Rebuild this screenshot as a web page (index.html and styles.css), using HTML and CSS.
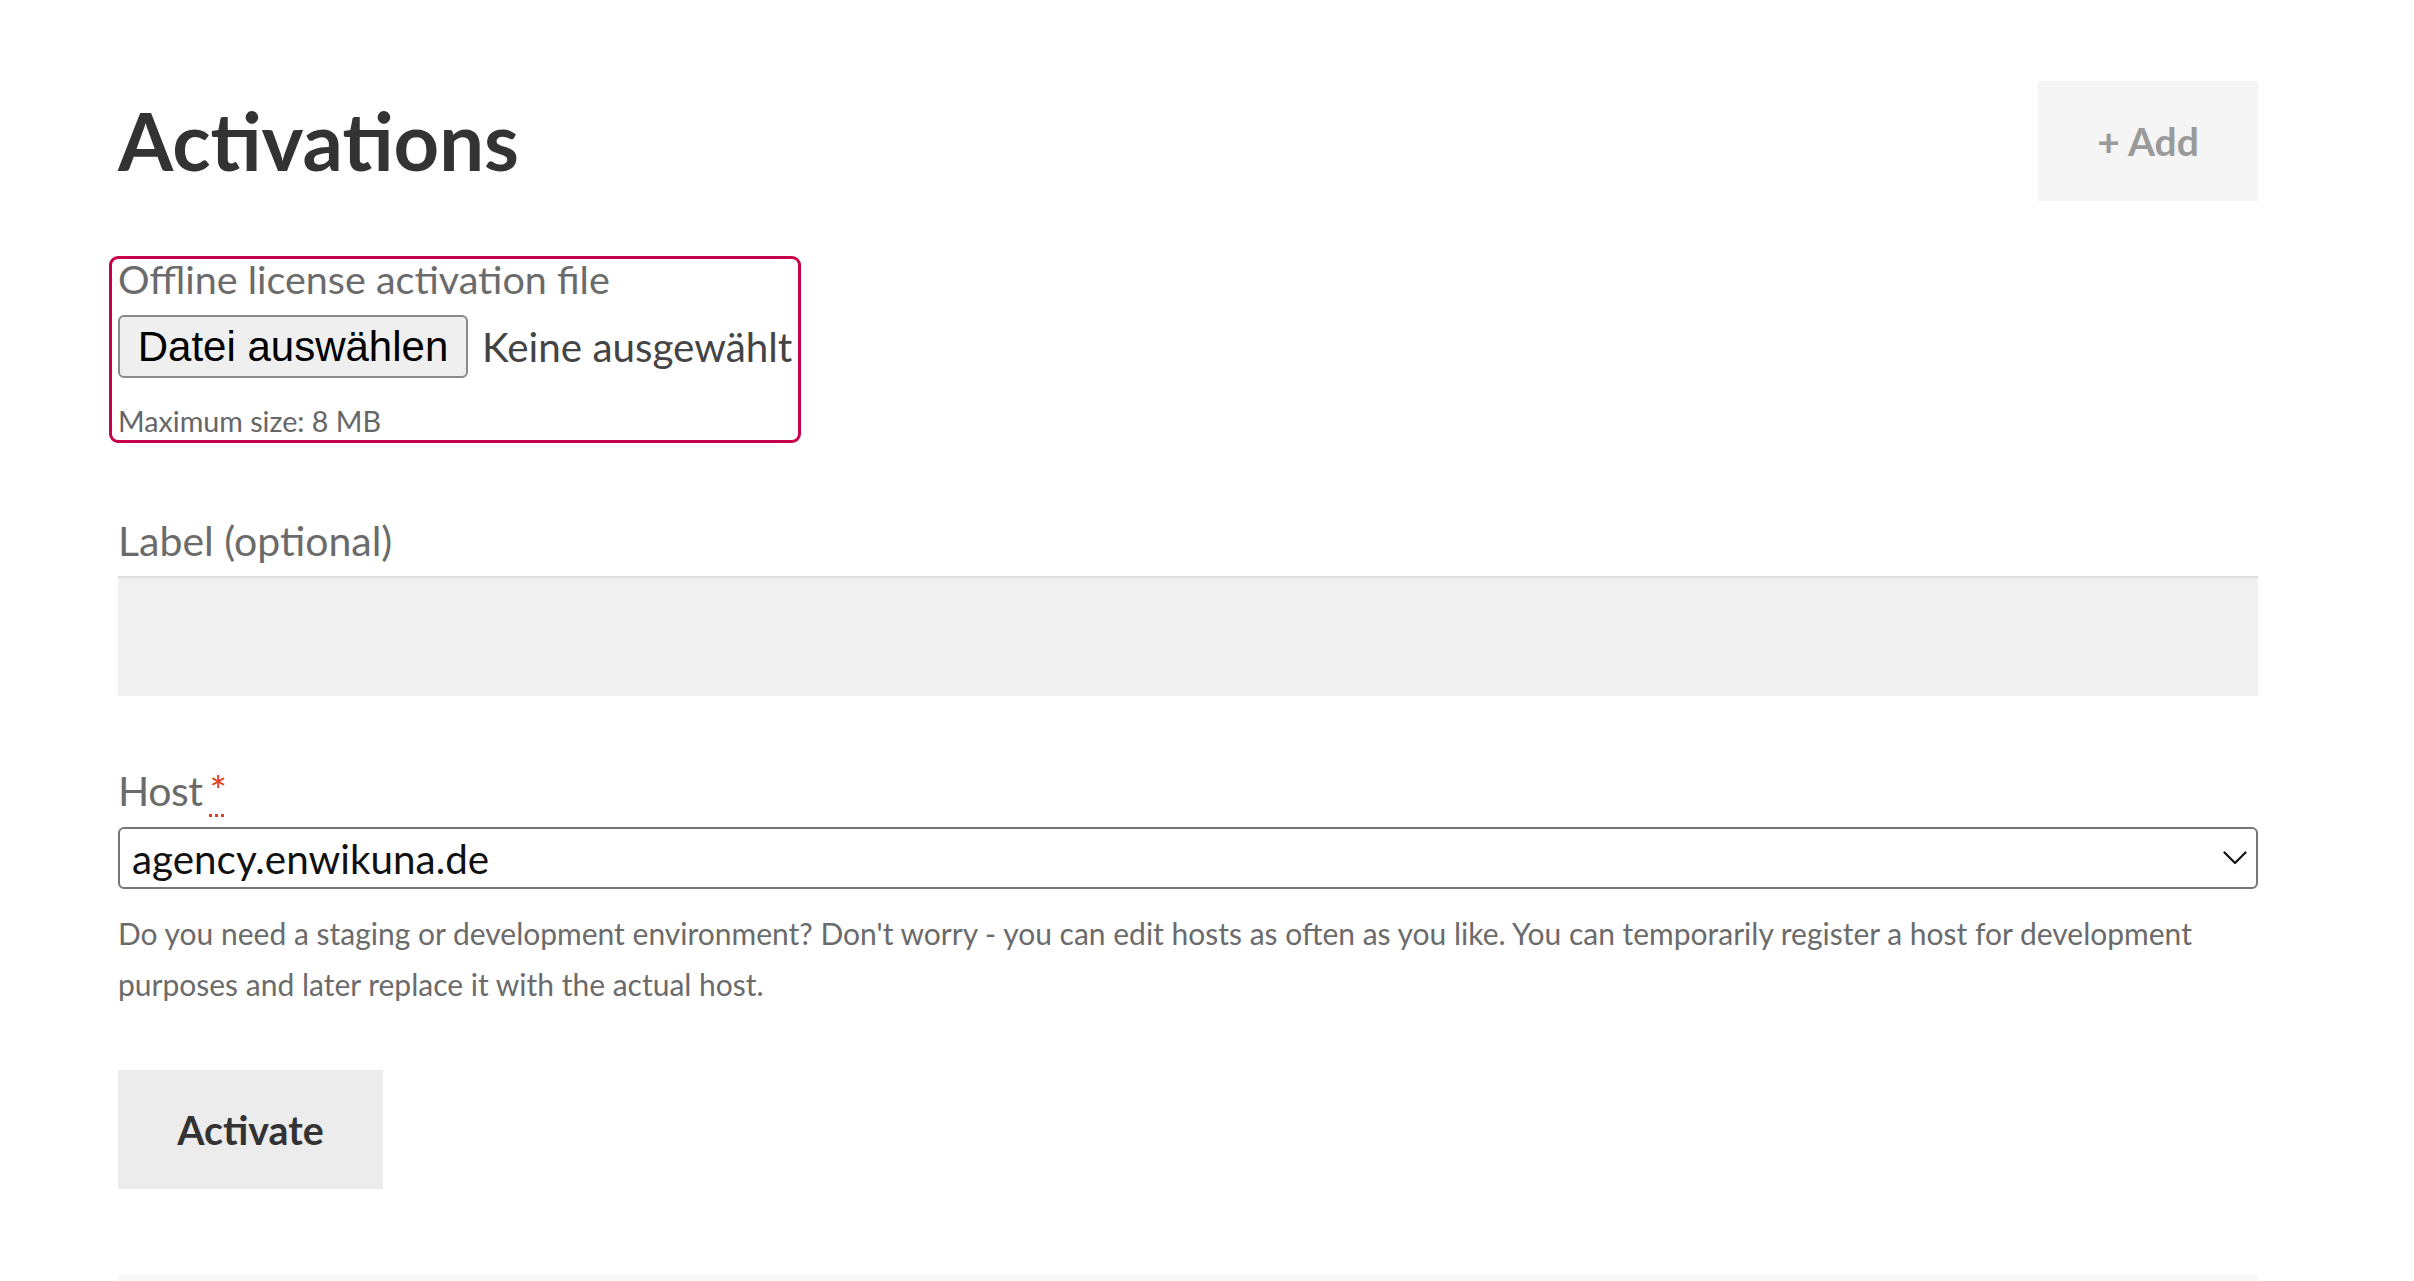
FILE: index.html
```html
<!DOCTYPE html>
<html lang="en">
<head>
<meta charset="utf-8">
<title>Activations</title>
<link rel="stylesheet" href="styles.css">
</head>
<body>
<main class="page">
  <header class="page-head">
    <h1 class="title">Activations</h1>
    <button class="btn-add" type="button">+ Add</button>
  </header>

  <form class="form">
    <div class="file-box">
      <label class="label label-file">Offline license activation file</label>
      <div class="file-row">
        <button class="file-btn" type="button">Datei auswählen</button>
        <span class="file-name">Keine ausgewählt</span>
      </div>
      <small class="hint">Maximum size: 8 MB</small>
    </div>

    <div class="field field-label">
      <label class="label" for="lbl">Label (optional)</label>
      <input class="text-input" id="lbl" type="text">
    </div>

    <div class="field field-host">
      <label class="label label-host" for="host">Host <abbr class="req" title="required">*</abbr></label>
      <div class="select-wrap">
        <select class="select" id="host">
          <option>agency.enwikuna.de</option>
        </select>
        <svg class="chev" width="24" height="14" viewBox="0 0 24 14"><path d="M1.5 1.5 L12 12 L22.5 1.5" fill="none" stroke="#111" stroke-width="2.2" stroke-linecap="round" stroke-linejoin="round"/></svg>
      </div>
      <p class="help">Do you need a staging or development environment? Don't worry - you can edit hosts as often as you like. You can temporarily register a host for development purposes and later replace it with the actual host.</p>
    </div>

    <button class="btn-activate" type="button">Activate</button>
  </form>

  <div class="next-band"></div>
</main>
</body>
</html>
```

FILE: styles.css
```css
* { box-sizing: border-box; }

html, body {
  margin: 0;
  padding: 0;
  background: #fff;
  font-family: "Lato", "Noto Sans", sans-serif;
  overflow: hidden;
}

.page {
  width: 2140px;
  margin: 0 0 0 118px;
  padding-top: 81px;
}

.page-head {
  display: flex;
  justify-content: space-between;
  align-items: center;
  height: 120px;
}

.title {
  margin: 0;
  font-size: 79.5px;
  font-weight: 700;
  line-height: 1;
  color: #333;
}

.btn-add {
  width: 220px;
  height: 120px;
  border: 0;
  background: #f5f5f5;
  color: #9a9a9a;
  font-family: inherit;
  font-size: 39px;
  font-weight: 700;
  padding: 0;
}

.form {
  display: flex;
  flex-direction: column;
  align-items: stretch;
}

.file-box {
  display: flex;
  flex-direction: column;
  align-items: flex-start;
  width: fit-content;
  margin-top: 55px;
  margin-left: -9px;
  padding: 2px 6px 4px 6px;
  border: 3px solid #c8004c;
  border-radius: 9px;
}

.label {
  display: block;
  font-size: 41px;
  line-height: 46px;
  color: #6b6b6b;
}

.label-file {
  font-size: 39.5px;
  line-height: 36px;
}

.label-host {
  letter-spacing: -0.5px;
}

.file-row {
  display: flex;
  align-items: center;
  gap: 14px;
  margin-top: 18px;
}

.file-btn {
  width: 350px;
  height: 63px;
  padding: 0;
  border: 2px solid #8a8a8a;
  border-radius: 6px;
  background: #efefef;
  color: #000;
  font-family: "Liberation Sans", Arial, sans-serif;
  font-size: 42px;
}

.file-name {
  font-size: 40.4px;
  color: #444;
}

.hint {
  display: block;
  margin-top: 28px;
  font-size: 28.7px;
  line-height: 30px;
  color: #666;
}

.field-label {
  margin-top: 75px;
}

.field-host {
  margin-top: 72px;
}

.field .label {
  margin-bottom: 12px;
}

.field .label-host {
  margin-bottom: 13px;
}

.text-input {
  display: block;
  width: 100%;
  height: 120px;
  border: 0;
  background: #f1f1f1;
  box-shadow: inset 0 3px 2px -1px #dcdcdc;
  font-family: inherit;
  font-size: 36px;
  padding: 0 14px;
}

.req {
  margin-left: -3px;
  color: #e2401c;
  text-decoration: underline dotted #e2401c;
  text-underline-offset: 8px;
  text-decoration-thickness: 3px;
}

.select-wrap {
  position: relative;
}

.select {
  display: block;
  width: 100%;
  height: 62px;
  margin: 0;
  padding: 0 60px 0 12px;
  border: 2px solid #767676;
  border-radius: 6px;
  background: #fff;
  color: #111;
  font-family: inherit;
  font-size: 40.4px;
  appearance: none;
  -webkit-appearance: none;
}

.chev {
  position: absolute;
  right: 11px;
  top: 24px;
}

.help {
  margin: 19px 0 0;
  font-size: 30px;
  line-height: 51px;
  color: #6b6b6b;
}

.btn-activate {
  align-self: flex-start;
  width: 265px;
  height: 119px;
  margin-top: 60px;
  border: 0;
  background: #ececec;
  color: #333;
  font-family: inherit;
  font-size: 39.3px;
  font-weight: 700;
  padding: 0;
}

.next-band {
  height: 40px;
  margin-top: 85px;
  background: #f8f8f8;
}
```
